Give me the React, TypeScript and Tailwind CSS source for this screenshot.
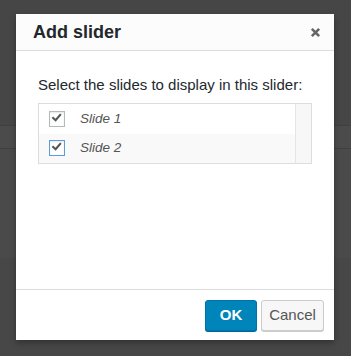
import React from 'react';

function CheckBox({ focused }: { focused?: boolean }) {
  return (
    <span
      className={`flex h-4 w-4 items-center justify-center border bg-white shadow-[inset_0_1px_2px_rgba(0,0,0,0.1)] ${
        focused ? 'border-[#5b9dd9]' : 'border-[#b4b9be]'
      }`}
    >
      <svg viewBox="0 0 16 16" className="h-4 w-4">
        <path d="M3.6 6.8 L6.4 9.4 L11.6 3.4" fill="none" stroke="#555" strokeWidth="2.4" strokeLinecap="square" />
      </svg>
    </span>
  );
}

const slides = ['Slide 1', 'Slide 2'];

export default function App() {
  return (
    <div className="flex h-[356px] w-[351px] flex-col bg-[#464646] font-['Liberation_Sans',Arial,sans-serif]">
      <div className="relative flex-1">
        {/* faint background admin bands */}
        <div className="absolute left-0 right-0 top-[125px] h-[24px] border-y border-[#3f3f3f] bg-[#4b4b4b]" />
        <div className="absolute bottom-0 left-0 right-0 top-[149px] bg-[#4a4a4a]" />
        <div className="absolute bottom-0 left-0 right-0 top-[258px] bg-[#474747]" />

        <div className="absolute left-[16px] top-[14px] flex h-[326px] w-[318px] flex-col bg-white shadow-[0_3px_6px_rgba(0,0,0,0.3)]">
          <div className="flex h-[37px] items-center justify-between border-b border-[#ddd] bg-[#fcfcfc] pl-[17px] pr-[13px]">
            <h1 className="text-[18px] font-bold text-[#23282d]">Add slider</h1>
            <svg viewBox="0 0 12 12" className="h-[11px] w-[11px]">
              <path d="M2 2 L10 10 M10 2 L2 10" stroke="#666" strokeWidth="2.8" strokeLinecap="butt" />
            </svg>
          </div>

          <div className="flex-1 px-[22px] pt-[24px]">
            <p className="text-[15px] leading-[20px] text-[#23282d]">Select the slides to display in this slider:</p>
            <div className="mt-[8px] flex h-[61px] border border-[#ddd] shadow-[inset_0_1px_2px_rgba(0,0,0,0.07)]">
              <div className="flex flex-1 flex-col">
                {slides.map((s, i) => (
                  <div
                    key={s}
                    className={`flex h-[29.5px] items-center pl-[10px] ${i === 1 ? 'bg-[#f9f9f9]' : 'bg-white'}`}
                  >
                    <CheckBox focused={i === 1} />
                    <span className="ml-[15px] text-[13.5px] italic text-[#555]">{s}</span>
                  </div>
                ))}
              </div>
              <div className="w-[16px] border-l border-[#e5e5e5] bg-[#f7f7f7]" />
            </div>
          </div>

          <div className="flex h-[51px] items-start justify-end gap-[4px] border-t border-[#ddd] pr-[10px] pt-[10px]">
            <button className="h-[31px] w-[52px] rounded-[3px] border border-[#0073aa] bg-[#0085ba] text-[15px] font-bold text-white shadow-[0_1px_0_#006799]">
              OK
            </button>
            <button className="h-[31px] w-[63px] rounded-[3px] border border-[#ccc] bg-[#f7f7f7] text-[15px] text-[#555] shadow-[0_1px_0_#ccc]">
              Cancel
            </button>
          </div>
        </div>
      </div>
    </div>
  );
}
